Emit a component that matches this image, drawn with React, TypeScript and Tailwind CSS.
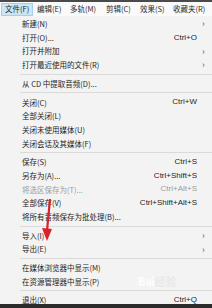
import React from "react";

type Item =
  | { sep: true }
  | { label: string; shortcut?: string; sub?: boolean; disabled?: boolean; sep?: false };

const menus = [
  { t: "文件(F)", w: "w-[32px]" },
  { t: "编辑(E)", w: "w-[33px]" },
  { t: "多轨(M)", w: "w-[36px]" },
  { t: "剪辑(C)", w: "w-[34px]" },
  { t: "效果(S)", w: "w-[33px]" },
  { t: "收藏夹(R)", w: "w-[40px]" },
];

const items: Item[] = [
  { label: "新建(N)", sub: true },
  { label: "打开(O)...", shortcut: "Ctrl+O" },
  { label: "打开并附加", sub: true },
  { label: "打开最近使用的文件(R)", sub: true },
  { sep: true },
  { label: "从 CD 中提取音频(D)..." },
  { sep: true },
  { label: "关闭(C)", shortcut: "Ctrl+W" },
  { label: "全部关闭(L)" },
  { label: "关闭未使用媒体(U)" },
  { label: "关闭会话及其媒体(F)" },
  { sep: true },
  { label: "保存(S)", shortcut: "Ctrl+S" },
  { label: "另存为(A)...", shortcut: "Ctrl+Shift+S" },
  { label: "将选区保存为(T)...", shortcut: "Ctrl+Alt+S", disabled: true },
  { label: "全部保存(V)", shortcut: "Ctrl+Shift+Alt+S" },
  { label: "将所有音频保存为批处理(B)..." },
  { sep: true },
  { label: "导入(I)", sub: true },
  { label: "导出(E)", sub: true },
  { sep: true },
  { label: "在媒体浏览器中显示(M)" },
  { label: "在资源管理器中显示(P)" },
  { sep: true },
  { label: "退出(X)", shortcut: "Ctrl+Q" },
];

export default function App() {
  return (
    <div
      className="relative w-[212px] h-[308px] overflow-hidden bg-[#f3f3f3] text-[7.5px] leading-none text-[#1e1e1e] whitespace-nowrap"
      style={{ fontFamily: '"Noto Sans CJK SC", "Noto Sans", sans-serif' }}
    >
      <div className="h-[2px] bg-[#4a4a4a]" />
      {/* menu bar */}
      <div className="flex h-[14px] items-center bg-[#fafafa] pl-[1px]">
        {menus.map((m, i) => (
          <div
            key={m.t}
            className={
              m.w +
              (i === 0
                ? " flex h-[13px] items-center bg-[#cde6f7] border border-[#a6cfee] pl-[3px]"
                : " flex h-[13px] items-center pl-[4px] text-[#2a2a2a]")
            }
          >
            {m.t}
          </div>
        ))}
      </div>
      {/* dropdown */}
      <div className="flex flex-col pt-[1px]">
        {items.map((it, i) =>
          it.sep ? (
            <div key={i} className="my-[2px] ml-[20px] h-px bg-[#dadada]" />
          ) : (
            <div key={i} className="flex h-[13.7px] items-center pl-[22px] pr-[6px]">
              <span className={it.disabled ? "text-[#9c9c9c]" : ""}>{it.label}</span>
              <span
                className={"ml-auto pr-[5px] text-[8px] " + (it.disabled ? "text-[#9c9c9c]" : "")}
                style={{ fontFamily: '"Liberation Sans", Arial, sans-serif' }}
              >
                {it.shortcut}
              </span>
              <span className="w-[4px] text-[9px] text-[#555]">{it.sub ? "›" : ""}</span>
            </div>
          )
        )}
      </div>
      {/* watermark */}
      <div className="absolute left-[138px] top-[276px] text-[11px] font-bold text-white/80 tracking-tight">
        Bai<span className="text-[#e9e9e9]">经验</span>
      </div>
      {/* red arrow */}
      <svg className="absolute left-0 top-0" width="212" height="308">
        <line x1="50" y1="199" x2="47" y2="231" stroke="#d8232a" strokeWidth="2.2" />
        <polygon points="42,228 52,229 47,241" fill="#d8232a" />
      </svg>
      <div className="absolute bottom-0 left-0 h-[4px] w-full bg-[#2b2b2b]" />
    </div>
  );
}
